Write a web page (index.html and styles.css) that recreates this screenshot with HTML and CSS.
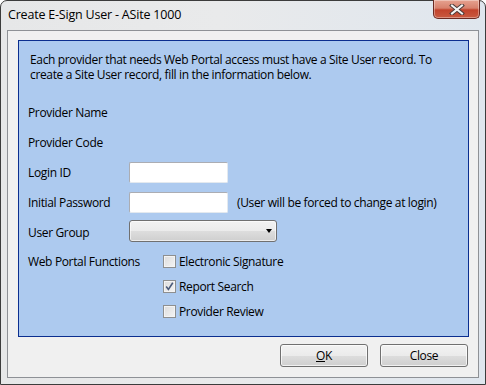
FILE: index.html
```html
<!DOCTYPE html>
<html lang="en">
<head>
  <meta charset="UTF-8">
  <title>Create E-Sign User - ASite 1000</title>
  <link rel="stylesheet" href="styles.css">
</head>
<body>

  <div class="window">
    <div class="titlebar">
      <span class="title">Create E-Sign User - ASite 1000</span>
      <button class="close-x" aria-label="Close">
        <svg width="16" height="11" viewBox="0 0 16 11">
          <path d="M3 1.5 L13 9.5 M13 1.5 L3 9.5" stroke="#4a3a38" stroke-width="4" stroke-linecap="square"/>
          <path d="M3 1.5 L13 9.5 M13 1.5 L3 9.5" stroke="#f4f4f4" stroke-width="2" stroke-linecap="square"/>
        </svg>
      </button>
    </div>

    <div class="client">
      <div class="panel">
        <p class="intro">Each provider that needs Web Portal access must have a Site User record. To create a Site User record, fill in the information below.</p>

        <div class="form">
          <label>Provider Name</label>
          <span></span>

          <label>Provider Code</label>
          <span></span>

          <label for="login">Login ID</label>
          <div><input type="text" id="login" class="field"></div>

          <label for="pwd">Initial Password</label>
          <div class="with-hint">
            <input type="text" id="pwd" class="field">
            <span>(User will be forced to change at login)</span>
          </div>

          <label>User Group</label>
          <div><div class="combo"><span class="arrow"></span></div></div>
        </div>

        <div class="functions">
          <label class="fn-label">Web Portal Functions</label>
          <div class="checks">
            <div class="check"><span class="box"></span>Electronic Signature</div>
            <div class="check"><span class="box checked">
              <svg width="9" height="9" viewBox="0 0 9 9"><path d="M1.2 4.6 L3.4 7.4 L7.8 0.8" fill="none" stroke="#4a5a7a" stroke-width="1.6"/></svg>
            </span>Report Search</div>
            <div class="check"><span class="box"></span>Provider Review</div>
          </div>
        </div>
      </div>

      <div class="actions">
        <button class="btn"><u>O</u>K</button>
        <button class="btn">Close</button>
      </div>
    </div>
  </div>

</body>
</html>
```

FILE: styles.css
```css
body {
  margin: 0;
  background: #fff;
  font-family: 'Open Sans', 'Noto Sans', sans-serif;
  font-size: 12px;
  letter-spacing: -0.35px;
  color: #000;
}

.window {
  width: 486px;
  height: 385px;
  box-sizing: border-box;
  border: 1px solid #3c3c3c;
  border-radius: 7px 7px 0 0;
  background: linear-gradient(90deg, #e6e7e8 0%, #e9eaeb 45%, #dfe6ee 100%);
  padding: 0 6px 6px 6px;
  display: flex;
  flex-direction: column;
}

.titlebar {
  height: 29px;
  display: flex;
  align-items: flex-start;
  justify-content: space-between;
}

.title {
  margin-top: 5px;
  margin-left: 1px;
  font-size: 12.5px;
  letter-spacing: -0.2px;
  color: #000;
}

.close-x {
  width: 47px;
  height: 19px;
  margin-top: -1px;
  margin-right: -1px;
  padding: 0;
  border: 1px solid #6b2a22;
  border-top: none;
  border-radius: 0 0 5px 5px;
  background: linear-gradient(#e6a290 0%, #d7816d 45%, #c2432c 55%, #c95a40 100%);
  box-shadow: inset 0 0 0 1px rgba(255,255,255,0.35);
  display: flex;
  align-items: center;
  justify-content: center;
}

.client {
  flex: 1;
  background: #f0f0f0;
  border: 1px solid #8e9196;
  display: flex;
  flex-direction: column;
}

.panel {
  margin: 9px 9px 0 10px;
  height: 297px;
  box-sizing: border-box;
  background: #adcaef;
  border: 1px solid #0b2e8f;
  padding: 11px 9px 0 9px;
}

.intro {
  margin: 0 0 15px 2px;
  line-height: 15px;
}

.form {
  display: grid;
  grid-template-columns: 101px 1fr;
  grid-auto-rows: 30px;
  align-items: center;
}

.field {
  width: 99px;
  height: 21px;
  box-sizing: border-box;
  border: 1px solid #abadb3;
  border-right-color: #e3e9ef;
  border-bottom-color: #e3e9ef;
  border-radius: 2px;
  background: #fff;
  margin: 0;
  display: block;
}

.with-hint {
  display: flex;
  align-items: center;
  gap: 9px;
}

.combo {
  width: 148px;
  height: 22px;
  box-sizing: border-box;
  border: 1px solid #707070;
  border-radius: 3px;
  background: linear-gradient(#f2f2f2 0%, #ebebeb 50%, #dddddd 51%, #cfcfcf 100%);
  box-shadow: inset 0 0 0 1px rgba(255,255,255,0.6);
  display: flex;
  align-items: center;
  justify-content: flex-end;
  padding-right: 4px;
  margin-top: -2px;
}

.arrow {
  width: 0;
  height: 0;
  border-left: 3.5px solid transparent;
  border-right: 3.5px solid transparent;
  border-top: 4px solid #000;
}

.functions {
  display: flex;
  margin-top: 2px;
}

.fn-label {
  width: 135px;
  height: 25px;
  line-height: 25px;
}

.checks {
  display: flex;
  flex-direction: column;
}

.check {
  height: 25px;
  display: flex;
  align-items: center;
  gap: 3px;
}

.box {
  width: 13px;
  height: 13px;
  box-sizing: border-box;
  border: 1px solid #8e8f8f;
  background: linear-gradient(135deg, #dcdcdc 0%, #f4f4f4 100%);
  box-shadow: inset 0 0 0 1px #f4f4f4;
  display: flex;
  align-items: center;
  justify-content: center;
}

.actions {
  display: flex;
  justify-content: flex-end;
  gap: 12px;
  margin: 7px 10px 0 0;
}

.btn {
  width: 88px;
  height: 23px;
  padding: 0;
  border: 1px solid #707070;
  border-radius: 3px;
  background: linear-gradient(#f2f2f2 0%, #ebebeb 50%, #dddddd 51%, #cfcfcf 100%);
  box-shadow: inset 0 0 0 1px rgba(255,255,255,0.7);
  font-family: 'Open Sans', 'Noto Sans', sans-serif;
  font-size: 12px;
  letter-spacing: -0.35px;
  color: #000;
}
```
